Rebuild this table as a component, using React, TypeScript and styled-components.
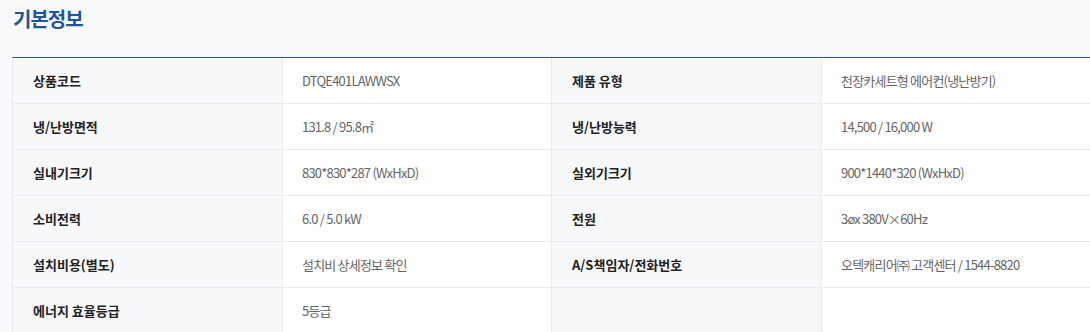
import { Fragment } from 'react'
import styled, { createGlobalStyle } from 'styled-components'

const GlobalStyle = createGlobalStyle`
  html, body {
    margin: 0;
    padding: 0;
    background: #f8f9fb;
    overflow: hidden;
  }
  body {
    font-family: "Noto Sans CJK KR", "Noto Sans", sans-serif;
  }
`

const Section = styled.section`
  padding: 4px 0 0 12px;
  width: 1100px;
`

const Title = styled.h2`
  margin: 0 0 23px 1px;
  font-size: 20px;
  line-height: 30px;
  font-weight: 700;
  color: #1d55a6;
  letter-spacing: -1px;
`

const Table = styled.div`
  display: grid;
  grid-template-columns: 270px 269px 270px 1fr;
  border-top: 1px solid #1f5a9f;
  border-left: 1px solid #e6e8ec;
`

const Cell = styled.div<{ $head?: boolean }>`
  height: 46px;
  display: flex;
  align-items: center;
  box-sizing: border-box;
  padding-left: ${p => (p.$head ? '20px' : '19px')};
  background: ${p => (p.$head ? '#f7f8fa' : '#ffffff')};
  border-bottom: 1px solid #e9ebee;
  border-right: 1px solid #e9ebee;
  font-size: 13px;
  font-weight: ${p => (p.$head ? 700 : 400)};
  color: ${p => (p.$head ? '#222222' : '#666666')};
  letter-spacing: ${p => (p.$head ? '0' : '-0.8px')};
  white-space: nowrap;
`

const rows: [string, string, string, string][] = [
  ['상품코드', 'DTQE401LAWWSX', '제품 유형', '천장카세트형 에어컨(냉난방기)'],
  ['냉/난방면적', '131.8 / 95.8㎡', '냉/난방능력', '14,500 / 16,000 W'],
  ['실내기크기', '830*830*287 (WxHxD)', '실외기크기', '900*1440*320 (WxHxD)'],
  ['소비전력', '6.0 / 5.0 kW', '전원', '3øx 380V×60Hz'],
  ['설치비용(별도)', '설치비 상세정보 확인', 'A/S책임자/전화번호', '오텍캐리어㈜ 고객센터 / 1544-8820'],
  ['에너지 효율등급', '5등급', '', '']
]

const App = () => {
  return (
    <>
      <GlobalStyle />
      <Section>
        <Title>기본정보</Title>
        <Table>
          {rows.map((r, i) => (
            <Fragment key={i}>
              <Cell $head>{r[0]}</Cell>
              <Cell>{r[1]}</Cell>
              <Cell $head>{r[2]}</Cell>
              <Cell>{r[3]}</Cell>
            </Fragment>
          ))}
        </Table>
      </Section>
    </>
  )
}

export default App
